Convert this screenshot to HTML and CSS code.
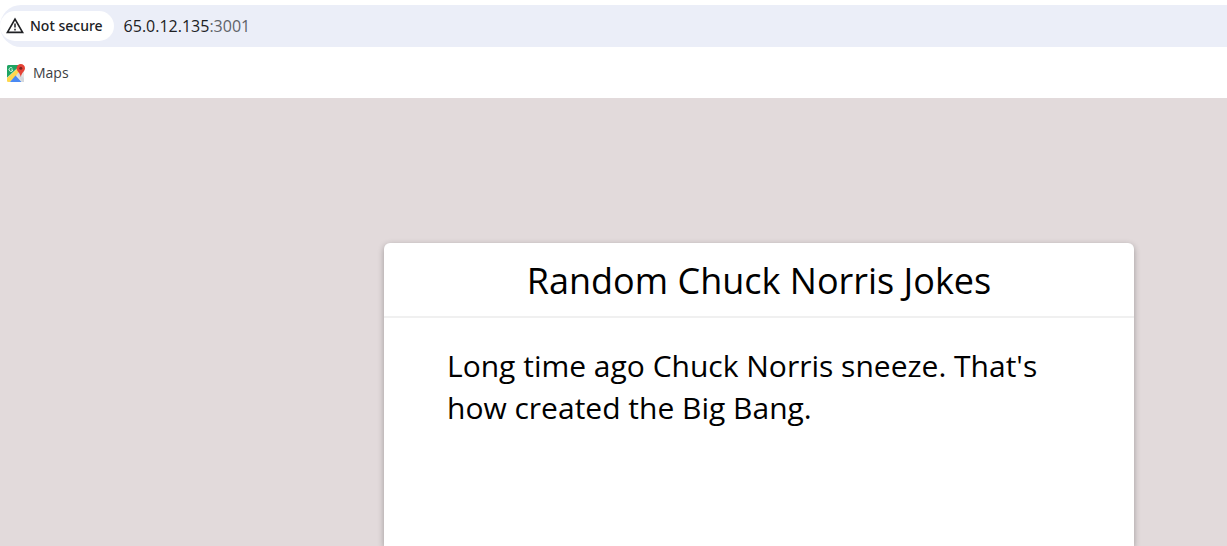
FILE: index.html
```html
<!DOCTYPE html>
<html lang="en">
<head>
<meta charset="utf-8">
<title>Random Chuck Norris Jokes</title>
<link rel="stylesheet" href="styles.css">
</head>
<body>
<header class="browser">
  <div class="address-bar">
    <button class="security" type="button">
      <svg class="warning" viewBox="0 0 18 18" aria-hidden="true">
        <path d="M9 2.2 16.600 15.400H1.400Z" fill="none" stroke="#202124" stroke-width="1.7"/>
        <path d="M9 6.5v4M9 11.8v1.6" stroke="#202124" stroke-width="1.5"/>
      </svg>
      <span>Not secure</span>
    </button>
    <a class="url" href="#">65.0.12.135<span class="port">:3001</span></a>
  </div>
  <nav class="bookmarks">
    <a class="bookmark" href="#">
      <svg class="maps" viewBox="0 0 18 18" aria-hidden="true">
        <rect y="1" width="17" height="17" rx="1.5" fill="#e3e5e4"/>
        <path d="M0 14 11 4l3 3L3 18H1.500Q0 18 0 16.500Z" fill="#ffd84d"/>
        <path d="M0 13.500 11 3.500V1H1.500Q0 1 0 2.500Z" fill="#1fa463"/>
        <path d="M3 18 8.500 11.500 14.500 18Z" fill="#4a89f3"/>
        <path d="M9.500 10.500 11.500 8.500 17 14.500V18H15.500Z" fill="#d5d8dc"/>
        <path d="M5.400 4.300A1.900 1.900 0 1 0 5.800 5.900H4.200" fill="none" stroke="#d9f3e5" stroke-width="1"/>
        <path d="M13.800 0A4.200 4.200 0 0 1 18 4.200C18 7.300 14.600 8.300 13.800 13 13 8.300 9.600 7.300 9.600 4.200A4.200 4.200 0 0 1 13.800 0Z" fill="#e54336"/>
        <circle cx="13.800" cy="4.200" r="1.500" fill="#7b2320"/>
      </svg>
      <span>Maps</span>
    </a>
  </nav>
</header>
<main class="page">
  <article class="card">
    <h1 class="title">Random Chuck Norris Jokes</h1>
    <p class="joke">Long time ago Chuck Norris sneeze. That's how created the Big Bang.</p>
  </article>
</main>
</body>
</html>
```
FILE: styles.css
```css
* { box-sizing: border-box; }
html, body { height: 100%; }
body {
  margin: 0;
  display: flex;
  flex-direction: column;
  overflow: hidden;
  background: #fff;
  color: #000;
  font-family: "Open Sans", "Noto Sans", sans-serif;
}
.browser { padding-top: 5px; }
.address-bar {
  display: flex;
  align-items: center;
  gap: 10px;
  height: 42px;
  background: #ebeef8;
  border-radius: 21px 0 0 21px;
}
.security {
  display: flex;
  align-items: center;
  gap: 6px;
  height: 30px;
  padding: 0 11px 0 6px;
  border: 0;
  border-radius: 15px;
  background: #fff;
  color: #202124;
  font: 500 14px/30px "Noto Sans", "Open Sans", sans-serif;
}
.warning { width: 18px; height: 18px; }
.url {
  color: #202124;
  font-size: 16px;
  text-decoration: none;
}
.port { color: #5f6368; }
.bookmarks {
  display: flex;
  align-items: center;
  height: 51px;
  padding-left: 7px;
}
.bookmark {
  display: flex;
  align-items: center;
  gap: 8px;
  color: #3c4043;
  font-size: 14px;
  text-decoration: none;
}
.maps { width: 18px; height: 18px; }
.page {
  flex: 1;
  display: flex;
  min-height: 0;
  padding: 145px 93px 0 384px;
  background: #e2dadb;
}
.card {
  flex: 1;
  background: #fff;
  border-radius: 6px 6px 0 0;
  box-shadow: 0 2px 6px rgba(0, 0, 0, 0.3);
}
.title {
  margin: 0;
  padding: 14px 16px 11px;
  border-bottom: 2px solid #f0f0f0;
  font-size: 36px;
  font-weight: 400;
  line-height: 48px;
  text-align: center;
}
.joke {
  margin: 0;
  padding: 27px 63px;
  font-size: 30px;
  line-height: 42px;
}
```
